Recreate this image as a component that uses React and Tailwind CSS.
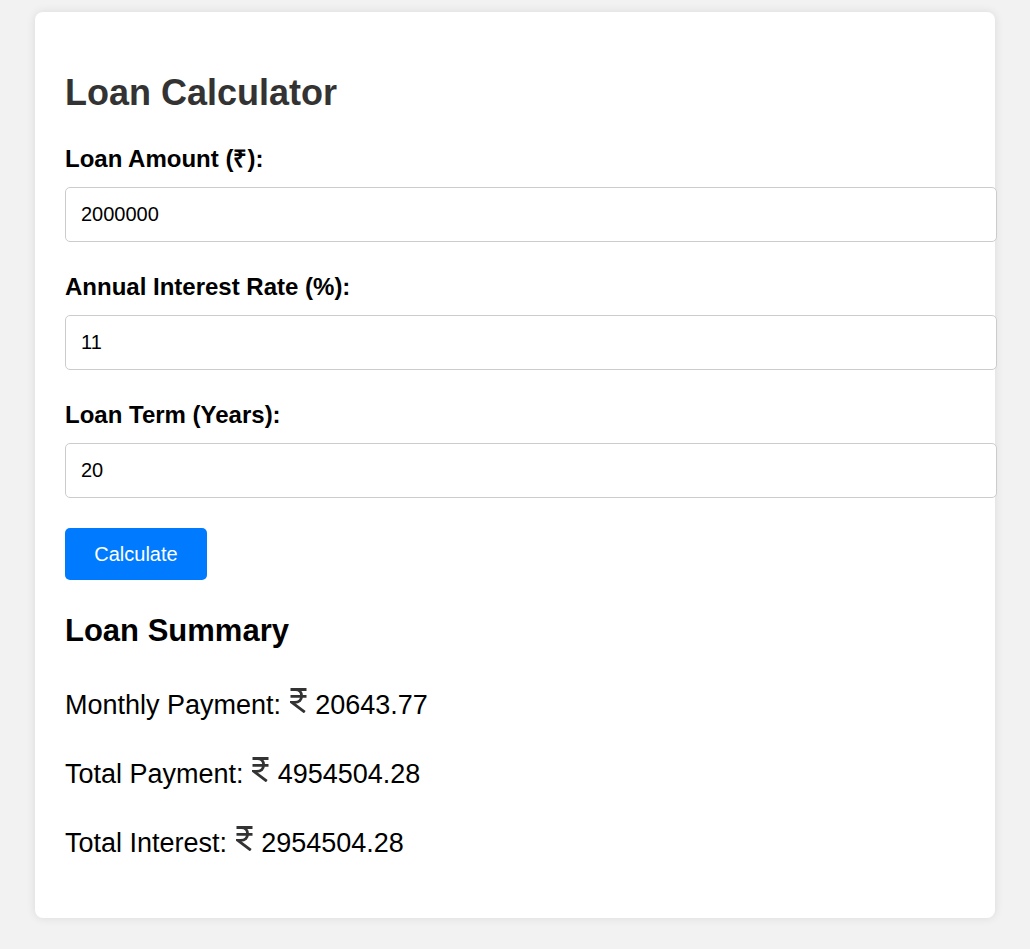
import React from "react";

const fields = [
    { label: "Loan Amount (₹):", value: "2000000" },
    { label: "Annual Interest Rate (%):", value: "11" },
    { label: "Loan Term (Years):", value: "20" },
];

const summary = [
    { label: "Monthly Payment:", value: "20643.77" },
    { label: "Total Payment:", value: "4954504.28" },
    { label: "Total Interest:", value: "2954504.28" },
];

function Rupee() {
    return (
        <svg
            viewBox="0 0 17 25"
            className="ml-px mr-px inline h-[25px] w-[17px] align-[1px]"
            fill="none"
            stroke="#333"
            strokeWidth="2.8"
        >
            <path d="M0.5 1.5H16.5M0.5 8.3H16.5M0.5 1.5H5.5C9.6 1.5 11.6 4.4 11.6 8C11.6 11.9 9 14.4 4.6 14.4H1.8L14.8 24.2" />
        </svg>
    );
}

export default function App() {
    return (
        <div className="min-h-screen bg-[#f2f2f2] pt-[12px] font-['Liberation_Sans',Arial,sans-serif]">
            <div className="mx-auto w-[960px] rounded-lg bg-white px-[30px] pt-[60px] pb-[58px] shadow-[0_0_10px_rgba(0,0,0,0.1)]">
                <h1 className="mb-[32px] text-[36px] leading-[41px] font-bold text-[#333]">Loan Calculator</h1>

                {fields.map((f) => (
                    <div key={f.label} className="mb-[31px] last-of-type:mb-[30px]">
                        <label className="mb-[15px] block text-[24px] leading-[27px] font-bold text-black">
                            {f.label}
                        </label>
                        <input
                            type="text"
                            defaultValue={f.value}
                            className="block h-[55px] w-[932px] rounded-[5px] border border-[#ccc] bg-white px-[15px] text-[20px] text-black outline-none"
                        />
                    </div>
                ))}

                <button className="flex h-[52px] w-[142px] items-center justify-center rounded-[5px] bg-[#007bff] text-[20px] text-white">
                    Calculate
                </button>

                <h2 className="mt-[33px] text-[31px] leading-[36px] font-bold text-black">Loan Summary</h2>

                {summary.map((s, i) => (
                    <p
                        key={s.label}
                        className={`${i === 0 ? "mt-[39px]" : "mt-[35px]"} text-[27px] leading-[34px] text-black`}
                    >
                        {s.label} <Rupee /> {s.value}
                    </p>
                ))}
            </div>
        </div>
    );
}
